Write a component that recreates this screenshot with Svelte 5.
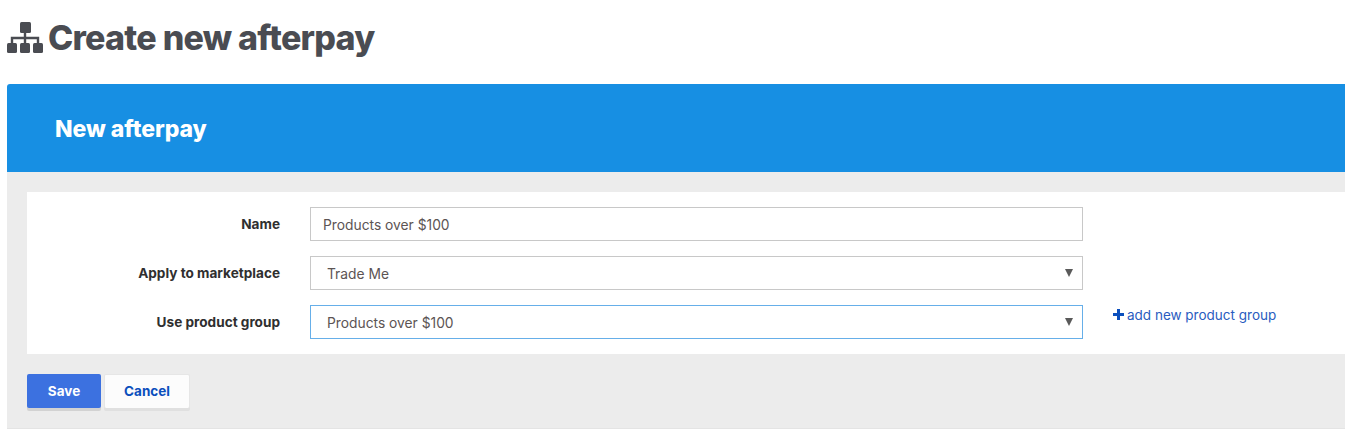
<script>
  let name = 'Products over $100';
  let marketplace = 'Trade Me';
  let group = 'Products over $100';
</script>

<div class="page">
  <h1>
    <svg class="sitemap" viewBox="0 0 36 31" width="36" height="31" aria-hidden="true">
      <rect x="13" y="0" width="11" height="11" rx="1.5" />
      <rect x="0" y="21" width="10" height="10" rx="1.5" />
      <rect x="13" y="21" width="10" height="10" rx="1.5" />
      <rect x="26" y="21" width="10" height="10" rx="1.5" />
      <path class="links" d="M18 11v10M5 21v-5h26v5" />
    </svg>
    Create new afterpay
  </h1>

  <div class="panel">
    <div class="panel-head">
      <h2>New afterpay</h2>
    </div>
    <div class="panel-body">
      <form class="card" on:submit|preventDefault>
        <label class="row">
          <span class="label">Name</span>
          <input class="control" type="text" bind:value={name} />
        </label>
        <label class="row">
          <span class="label">Apply to marketplace</span>
          <span class="select-wrap">
            <select class="control" bind:value={marketplace}>
              <option>Trade Me</option>
            </select>
            <svg class="arrow" viewBox="0 0 8 8" width="8" height="8" aria-hidden="true"><path d="M0 0h8L4 8z" /></svg>
          </span>
        </label>
        <div class="row">
          <label class="label" for="group">Use product group</label>
          <span class="select-wrap">
            <select id="group" class="control focused" bind:value={group}>
              <option>Products over $100</option>
            </select>
            <svg class="arrow" viewBox="0 0 8 8" width="8" height="8" aria-hidden="true"><path d="M0 0h8L4 8z" /></svg>
          </span>
          <a class="add-link" href="#add">
            <svg viewBox="0 0 11 11" width="11" height="11" aria-hidden="true"><path d="M4 0h3v4h4v3H7v4H4V7H0V4h4z" /></svg>
            add new product group
          </a>
        </div>
      </form>
      <div class="actions">
        <button class="btn primary" type="button">Save</button>
        <button class="btn" type="button">Cancel</button>
      </div>
    </div>
  </div>
</div>

<style>
  :global(body) {
    margin: 0;
    background: #fff;
    overflow: hidden;
  }

  .page {
    padding: 0 0 0 7px;
    font-family: Inter, "Noto Sans", sans-serif;
    color: #333;
  }

  h1 {
    display: flex;
    align-items: center;
    gap: 5px;
    height: 84px;
    margin: 0;
    padding-bottom: 9px;
    box-sizing: border-box;
    font-size: 34px;
    font-weight: 800;
    letter-spacing: -0.75px;
    color: #4a4c52;
  }

  .sitemap {
    flex: none;
    fill: #4a4c52;
  }

  .links {
    fill: none;
    stroke: #4a4c52;
    stroke-width: 2.4;
  }

  .panel {
    border-bottom: 1px solid #e4e4e4;
  }

  .panel-head {
    height: 88px;
    display: flex;
    align-items: center;
    padding: 2px 0 0 48px;
    box-sizing: border-box;
    background: #178fe3;
    border-radius: 3px 0 0 0;
  }

  h2 {
    margin: 0;
    font-size: 23px;
    font-weight: 800;
    letter-spacing: -0.05px;
    color: #fff;
  }

  .panel-body {
    background: #ececec;
    padding: 20px 0 20px 20px;
    height: 256px;
    box-sizing: border-box;
  }

  .card {
    background: #fff;
    padding: 15px 0;
    display: flex;
    flex-direction: column;
    gap: 15px;
  }

  .row {
    display: flex;
    align-items: center;
    height: 34px;
  }

  .label {
    width: 253px;
    margin-right: 30px;
    text-align: right;
    font-size: 13.6px;
    font-weight: 700;
    color: #2f2f2f;
  }

  .control {
    width: 773px;
    height: 34px;
    box-sizing: border-box;
    display: block;
    border: 1px solid #c8c8c8;
    border-radius: 0;
    background: #fff;
    padding: 2px 12px 0;
    font-family: inherit;
    font-size: 13.8px;
    color: #5c5454;
    outline: none;
    appearance: none;
  }

  select.control {
    padding-left: 16px;
  }

  .control.focused {
    border-color: #66afe9;
  }

  .select-wrap {
    position: relative;
    display: block;
  }

  .arrow {
    position: absolute;
    right: 10px;
    top: 13px;
    fill: #5a5a5a;
    pointer-events: none;
  }

  .add-link {
    display: flex;
    align-items: center;
    gap: 3px;
    margin: -15px 0 0 30px;
    font-size: 13.5px;
    color: #2a5cc0;
    text-decoration: none;
  }

  .add-link svg {
    fill: #0b4fbd;
  }

  .actions {
    display: flex;
    gap: 3px;
    margin-top: 20px;
  }

  .btn {
    width: 86px;
    height: 34px;
    box-sizing: border-box;
    padding: 0 0 2px;
    border: 1px solid #e6e6e6;
    border-bottom: none;
    border-radius: 2px;
    background: #fcfcfc;
    box-shadow: 0 3px 0 #e0e0e0;
    font-family: inherit;
    font-size: 13.5px;
    font-weight: 700;
    color: #0b4fbd;
  }

  .btn.primary {
    width: 74px;
    padding: 0;
    border: none;
    background: #3c71e0;
    box-shadow: 0 3px 0 #d2d2d2;
    color: #fff;
  }
</style>
